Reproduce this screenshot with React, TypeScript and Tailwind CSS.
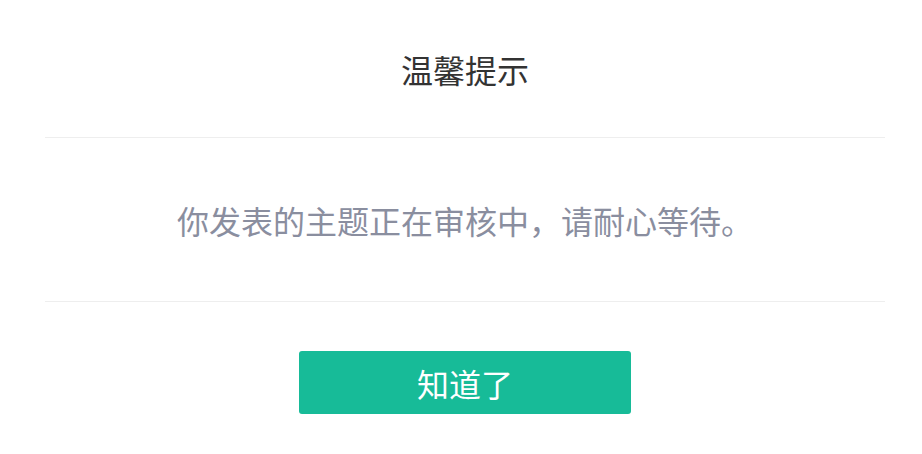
export default function App() {
  return (
    <main
      className="w-[922px] h-[454px] bg-white pl-[45px] pr-[37px]"
      style={{ fontFamily: '"Noto Sans CJK SC", "Noto Sans", sans-serif' }}
    >
      {/* Header */}
      <div className="h-[138px] flex items-center justify-center border-b border-[#eeeeee]">
        <h2 className="text-[32px] leading-none text-[#333333] font-normal">温馨提示</h2>
      </div>

      {/* Body */}
      <div className="h-[164px] flex items-center justify-center border-b border-[#eeeeee]">
        <p className="text-[32px] leading-none text-[#8a8e9f]">
          你发表的主题正在审核中，请耐心等待。
        </p>
      </div>

      {/* Footer */}
      <div className="flex justify-center pt-[49px]">
        <button
          type="button"
          className="w-[332px] h-[63px] rounded-[3px] bg-[#17bb98] text-white text-[32px] leading-none"
        >
          知道了
        </button>
      </div>
    </main>
  );
}
